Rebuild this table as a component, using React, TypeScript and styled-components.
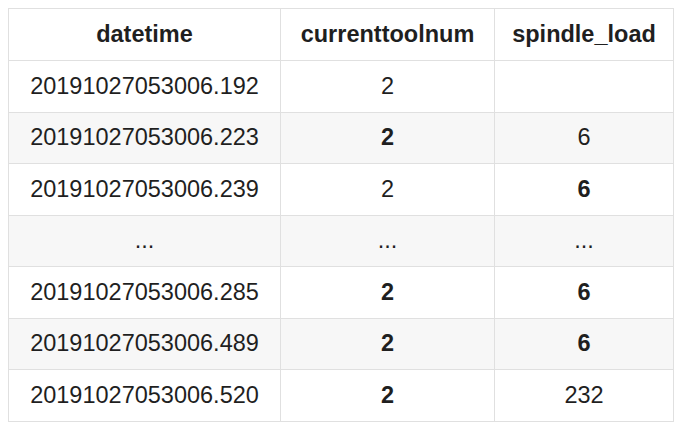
import React from "react";
import styled, { createGlobalStyle } from "styled-components";

const Global = createGlobalStyle`
  html, body { margin: 0; padding: 0; background: #ffffff; }
  body { font-family: "Liberation Sans", Arial, sans-serif; color: #1f1f1f; }
`;

const Wrap = styled.div`
  padding: 8px;
`;

const Table = styled.table`
  border-collapse: collapse;
  table-layout: fixed;
  width: 665px;
  font-size: 23.5px;
`;

const Th = styled.th`
  border: 1px solid #e0e0e0;
  height: 51px;
  padding: 0;
  font-weight: 700;
  text-align: center;
`;

const Row = styled.tr<{ $alt: boolean }>`
  background: ${(p) => (p.$alt ? "#f7f7f7" : "#ffffff")};
`;

const Td = styled.td<{ $bold?: boolean }>`
  border: 1px solid #e0e0e0;
  height: 50.5px;
  padding: 0;
  text-align: center;
  font-weight: ${(p) => (p.$bold ? 700 : 400)};
`;

type Cell = { v: string; b?: boolean };
const rows: Cell[][] = [
  [{ v: "20191027053006.192" }, { v: "2" }, { v: "" }],
  [{ v: "20191027053006.223" }, { v: "2", b: true }, { v: "6" }],
  [{ v: "20191027053006.239" }, { v: "2" }, { v: "6", b: true }],
  [{ v: "..." }, { v: "..." }, { v: "..." }],
  [{ v: "20191027053006.285" }, { v: "2", b: true }, { v: "6", b: true }],
  [{ v: "20191027053006.489" }, { v: "2", b: true }, { v: "6", b: true }],
  [{ v: "20191027053006.520" }, { v: "2", b: true }, { v: "232" }],
];

export default function App() {
  return (
    <Wrap>
      <Global />
      <Table>
        <colgroup>
          <col style={{ width: 272 }} />
          <col style={{ width: 214 }} />
          <col style={{ width: 179 }} />
        </colgroup>
        <thead>
          <tr>
            <Th>datetime</Th>
            <Th>currenttoolnum</Th>
            <Th>spindle_load</Th>
          </tr>
        </thead>
        <tbody>
          {rows.map((r, i) => (
            <Row key={i} $alt={i % 2 === 1}>
              {r.map((c, j) => (
                <Td key={j} $bold={c.b}>
                  {c.v}
                </Td>
              ))}
            </Row>
          ))}
        </tbody>
      </Table>
    </Wrap>
  );
}
